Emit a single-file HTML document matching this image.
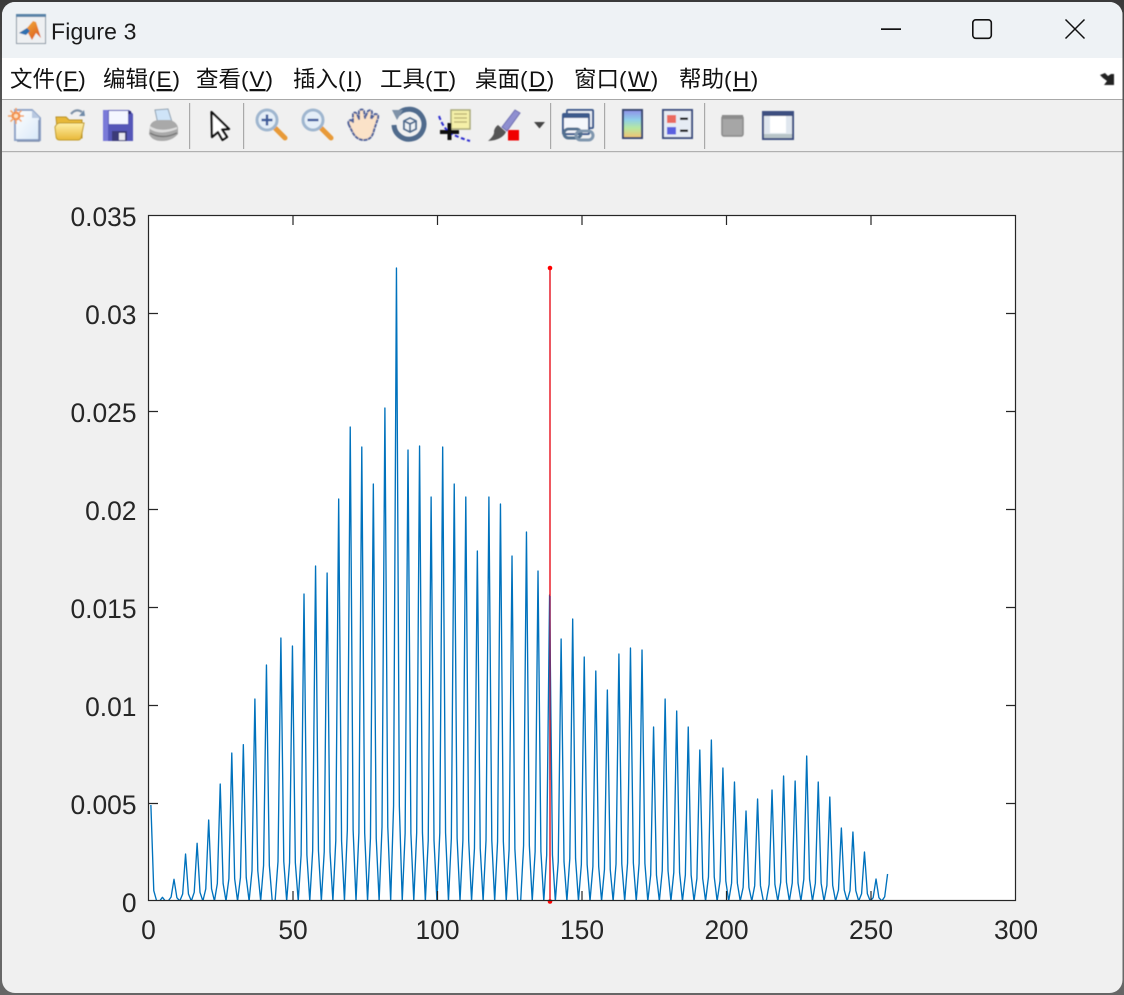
<!DOCTYPE html>
<html><head><meta charset="utf-8"><title>Figure 3</title>
<style>
html,body{margin:0;padding:0;width:1124px;height:995px;overflow:hidden;background:#6e6e6e}
svg{display:block;position:absolute;left:0;top:0}
.m{font-family:"Liberation Sans","Noto Sans CJK SC",sans-serif;font-size:22.5px;fill:#111}
.t{font-family:"Liberation Sans",Arial,sans-serif;font-size:26.4px;fill:#262626}
</style></head><body>
<svg width="1124" height="995" viewBox="0 0 1124 995" xmlns="http://www.w3.org/2000/svg">
<defs>
<linearGradient id="bk" x1="0" y1="0" x2="0" y2="1"><stop offset="0" stop-color="#3a3a3a"/><stop offset=".12" stop-color="#5a5a5a"/><stop offset=".5" stop-color="#8c8c8c"/><stop offset="1" stop-color="#666"/></linearGradient>
<linearGradient id="cb" x1="0" y1="0" x2="0" y2="1"><stop offset="0" stop-color="#8f8fe8"/><stop offset=".35" stop-color="#8fd0e8"/><stop offset=".65" stop-color="#b8e8a0"/><stop offset="1" stop-color="#f5c070"/></linearGradient>
<linearGradient id="fo" x1="0" y1="0" x2="0" y2="1"><stop offset="0" stop-color="#fff0a8"/><stop offset="1" stop-color="#e8b838"/></linearGradient>
<linearGradient id="pg" x1="0" y1="0" x2="1" y2="1"><stop offset="0" stop-color="#fff"/><stop offset="1" stop-color="#d8e8f8"/></linearGradient>
<linearGradient id="ml" x1="0" y1="0" x2="1" y2="1"><stop offset="0" stop-color="#f7c040"/><stop offset="1" stop-color="#d8501c"/></linearGradient>
<clipPath id="win"><rect x="2" y="2" width="1120.500" height="991" rx="13"/></clipPath>
<clipPath id="ax"><rect x="148.500" y="215.500" width="867" height="685.500"/></clipPath>
<filter id="s" x="-10%" y="-10%" width="120%" height="120%"><feGaussianBlur stdDeviation=".6"/></filter>
<filter id="l" x="-2%" y="-2%" width="104%" height="104%"><feGaussianBlur stdDeviation=".25"/></filter>
</defs>
<rect width="1124" height="995" fill="url(#bk)"/>
<rect width="1124" height="2" fill="#3a3a3a"/>
<g clip-path="url(#win)">
<rect x="0" y="0" width="1124" height="995" fill="#f0f0f0"/>
<rect x="0" y="0" width="1124" height="58" fill="#eef2f5"/>
<rect x="0" y="58" width="1124" height="41" fill="#fff"/>
<rect x="0" y="99" width="1124" height="1.200" fill="#a8a8a8"/>
<rect x="0" y="100" width="1124" height="51" fill="#f0f0f0"/>
<rect x="0" y="151" width="1124" height="1.200" fill="#b0b0b0"/>
</g>

<!-- app icon -->
<g filter="url(#s)">
<rect x="16.500" y="14.500" width="29" height="29" fill="#eef0f2" stroke="#8d99a6"/>
<rect x="16" y="14" width="30" height="3" fill="#5a84a8"/>
<path d="M19 33 L27 28 L33 21 L36 22 L41 38 L36 33 L32 40 L28 33 Z" fill="url(#ml)"/>
<path d="M19 33 L27 28 L30 31 L26 35 Z" fill="#2f6fb0"/>
</g>
<text x="51" y="39.500" font-family="'Liberation Sans',sans-serif" font-size="23" letter-spacing=".15" fill="#1a1a1a">Figure 3</text>

<!-- window buttons -->
<rect x="881" y="28.300" width="20" height="1.700" fill="#111"/>
<rect x="972.800" y="19.800" width="18.500" height="18.500" rx="3" fill="none" stroke="#111" stroke-width="1.600"/>
<path d="M1065.500 19.500 L1084.500 38.500 M1084.500 19.500 L1065.500 38.500" stroke="#111" stroke-width="1.500" fill="none"/>

<!-- menu -->
<g class="m">
<text class="m" x="10" y="87">文件<tspan letter-spacing="1">(<tspan text-decoration="underline">F</tspan>)</tspan></text>
<text class="m" x="103" y="87">编辑<tspan letter-spacing="1">(<tspan text-decoration="underline">E</tspan>)</tspan></text>
<text class="m" x="196" y="87">查看<tspan letter-spacing="1">(<tspan text-decoration="underline">V</tspan>)</tspan></text>
<text class="m" x="293" y="87">插入<tspan letter-spacing="1.500">(<tspan text-decoration="underline">I</tspan>)</tspan></text>
<text class="m" x="380" y="87">工具<tspan letter-spacing="1.200">(<tspan text-decoration="underline">T</tspan>)</tspan></text>
<text class="m" x="475" y="87">桌面<tspan letter-spacing="1.500">(<tspan text-decoration="underline">D</tspan>)</tspan></text>
<text class="m" x="574" y="87">窗口<tspan letter-spacing="1.500">(<tspan text-decoration="underline">W</tspan>)</tspan></text>
<text class="m" x="679" y="87">帮助<tspan letter-spacing="1.500">(<tspan text-decoration="underline">H</tspan>)</tspan></text>
</g>
<path d="M1100 75 L1105 73 L1108 76 L1111 74 L1114 74 L1114 85 L1104 85 L1107 81 L1103 78 Z" fill="#222" filter="url(#s)"/>

<!-- separators -->
<g fill="#a9a9a9">
<rect x="189" y="103" width="1.200" height="46"/><rect x="243" y="103" width="1.200" height="46"/>
<rect x="550" y="103" width="1.200" height="46"/><rect x="604" y="103" width="1.200" height="46"/>
<rect x="704" y="103" width="1.200" height="46"/>
</g>

<!-- toolbar icons -->
<g filter="url(#s)">
<!-- new -->
<path d="M15 110 H32 L40 118 V140 H15 Z" fill="url(#pg)" stroke="#8fa4c8" stroke-width="2"/>
<path d="M32 110 V118 H40 Z" fill="#b8c8e0"/>
<path d="M39 120 V141 H17" fill="none" stroke="#7f8fb0" stroke-width="1.500"/>
<circle cx="16" cy="116" r="4.500" fill="#f08038"/><path d="M16 108 V124 M8 116 H24 M10.500 110.500 L21.500 121.500 M21.500 110.500 L10.500 121.500" stroke="#f4a060" stroke-width="1.500"/>
<circle cx="16" cy="116" r="2" fill="#fde0c0"/>
<!-- open -->
<path d="M56 117 H66 L69 120 H82 V138 H58 Z" fill="#e8b838" stroke="#b89028"/>
<path d="M55 127 Q57 123 60 123 H84 L81 138 Q80 140 78 140 H60 Q56 140 56 136 Z" fill="url(#fo)" stroke="#c09a28"/>
<path d="M71 114 Q76 108 82 112" fill="none" stroke="#7f92a8" stroke-width="2.200"/><path d="M79 116 L85 116 L84 110 Z" fill="#6f8aa8"/>
<!-- save -->
<path d="M103 110 H129 L133 114 V141 H103 Z" fill="#5456b8"/>
<path d="M103 110 H108 V141 H103 Z" fill="#7a7ad8"/>
<rect x="109" y="111" width="19" height="13" fill="#f4f6ff"/>
<rect x="112" y="131" width="15" height="10" fill="#3a3a78"/><rect x="119" y="133" width="6" height="7" fill="#e8e8f0"/>
<rect x="128" y="111" width="3" height="3" fill="#2a2a70"/>
<!-- print -->
<path d="M155 110 L168 109 L172 122 L158 124 Z" fill="#cfe4f8" stroke="#90a0b0"/>
<path d="M150 126 Q152 120 160 120 H170 Q177 122 178 128 V134 Q172 141 162 141 Q152 141 149 134 Z" fill="#a9a9a9"/>
<path d="M150 126 Q160 133 177 127 L177 129 Q160 136 150 129 Z" fill="#dedede"/>
<path d="M150 133 Q162 140 177 133" fill="none" stroke="#777" stroke-width="1.500"/>
<!-- cursor -->
<path d="M211.500 112 L229 129 L222 129.500 L227 137 L222.500 140 L218 132 L212 137 Z" fill="#fff" stroke="#111" stroke-width="2.200" stroke-linejoin="round"/>
<!-- zoom in -->
<path d="M275 128 L285 138" stroke="#e89a38" stroke-width="5" stroke-linecap="round"/>
<circle cx="267" cy="120" r="10" fill="#e4eef8" stroke="#9fb6cf" stroke-width="3"/>
<path d="M261.500 120 H272.500 M267 114.500 V125.500" stroke="#3a5a9a" stroke-width="2.400"/>
<!-- zoom out -->
<path d="M321 128 L331 138" stroke="#e89a38" stroke-width="5" stroke-linecap="round"/>
<circle cx="313" cy="120" r="10" fill="#e4eef8" stroke="#9fb6cf" stroke-width="3"/>
<path d="M307.500 120 H318.500" stroke="#3a5a9a" stroke-width="2.400"/>
<!-- hand -->
<path d="M349 125 Q347 121 351 120 L353 122 L353 114 Q355 111 357 114 L359 119 L359 111 Q362 108 364 111 L365 118 L368 111 Q371 109 372 112 L371 119 L375 114 Q379 114 378 118 L374 130 Q372 140 364 140 Q357 140 353 133 Z" fill="#fbe2c8" stroke="#50629a" stroke-width="2" stroke-linejoin="round" stroke-dasharray="4 .6"/>
<!-- rotate -->
<path d="M398 114 A15 15 0 1 1 394 125" fill="none" stroke="#4f6a8c" stroke-width="5"/>
<path d="M392 110 L403 110 L397 120 Z" fill="#7f92a8"/>
<path d="M404 121 L410 118 L416 121 V129 L410 132 L404 129 Z M404 121 L410 124 L416 121 M410 124 V132" fill="#eef2f6" stroke="#4f6a8c" stroke-width="1.800"/>
<!-- data cursor -->
<rect x="451" y="110" width="19" height="19" fill="#f5f0a8" stroke="#a8a878" stroke-width="1.500"/>
<path d="M454 114 H467 M454 118 H467 M454 122 H467" stroke="#c0b878" stroke-width="1.400"/>
<path d="M439 116 Q444 130 452 134 T470 141" fill="none" stroke="#2a2ad0" stroke-width="2" stroke-dasharray="4 2.500"/>
<path d="M440 132 H459 M449.500 123 V140" stroke="#111" stroke-width="4"/>
<!-- brush -->
<path d="M502 127 L515 110 L520 113 L507 131 Z" fill="#8f8fd0" stroke="#6f6fb0"/>
<path d="M498 125 L506 132 Q502 140 488 141 Q495 135 494 131 Q495 127 498 125 Z" fill="#555"/>
<rect x="508" y="130" width="11" height="10.500" fill="#f00000"/>
<path d="M534 122 H545 L539.500 128.500 Z" fill="#444"/>
<!-- link -->
<rect x="567" y="110" width="26" height="18" rx="1" fill="#e9eef6" stroke="#3c5a8c" stroke-width="2"/>
<rect x="563" y="114" width="26" height="20" rx="1" fill="#f4f6fb" stroke="#3c5a8c" stroke-width="2"/>
<rect x="563" y="114" width="26" height="4" fill="#3c5a8c"/>
<rect x="564" y="129" width="17" height="9" rx="4.500" fill="none" stroke="#52708f" stroke-width="3"/>
<rect x="576" y="131" width="17" height="9" rx="4.500" fill="none" stroke="#7f96ae" stroke-width="3"/>
<!-- colorbar -->
<rect x="623" y="110" width="19" height="28" fill="url(#cb)" stroke="#37476f" stroke-width="2"/>
<!-- legend -->
<rect x="663" y="110" width="29" height="28" fill="#e6ecf4" stroke="#3c4f80" stroke-width="2"/>
<rect x="667" y="115" width="9" height="8" fill="#ea6a60"/><rect x="667" y="127" width="9" height="7.500" fill="#5a60e0"/>
<rect x="680" y="117.500" width="8" height="2.500" fill="#222"/><rect x="680" y="129.500" width="8" height="2.500" fill="#222"/>
<!-- gray box -->
<rect x="722" y="116" width="21" height="20" rx="2" fill="#a6a6a6" stroke="#8a8a8a" stroke-width="1.500"/>
<rect x="722" y="115" width="21" height="4" fill="#8c8c8c"/>
<!-- frame -->
<rect x="763" y="112" width="30" height="27" fill="#dfe6ee" stroke="#3c4f80" stroke-width="2"/>
<rect x="763" y="112" width="30" height="4" fill="#3c4f80"/>
<rect x="770" y="116" width="16" height="17" fill="#fff"/>
<rect x="764" y="134" width="28" height="4" fill="#b8c4c8"/>
</g>

<!-- axes -->
<rect x="148.500" y="215.500" width="867" height="685" fill="#fff"/>
<g clip-path="url(#ax)"><g filter="url(#l)">
<polyline fill="none" stroke="#0072bd" stroke-width="1.350" stroke-linejoin="round" transform="translate(148 0) scale(2.889 1)" style="vector-effect:non-scaling-stroke" points="
1,805 2,890.700 3,901 4,901 5,897.300 6,901 7,901 8,897 9,879.300 10,897.700 11,901 12,894 13,854 14,894 15,901 16,892.300 17,843.300 18,892.300 19,901 20,888.900 21,820 22,888.900 23,901 24,883.500 25,784 26,883.500 27,901 28,878.800 29,753 30,878.800 31,901 32,877.500 33,744.700 34,877.500 35,901 36,870.700 37,699 38,870.700 39,901 40,865.600 41,665 42,865.600 43,901 44,901 45,861.500 46,638 47,861.500 48,901 49,862.700 50,646 51,862.700 52,901 53,855 54,594 55,855 56,901 57,850.700 58,566 59,850.700 60,901 61,851.800 62,573 63,851.800 64,901 65,840.700 66,499 67,840.700 68,901 69,829.900 70,427 71,829.900 72,901 73,832.900 74,447 75,832.900 76,901 77,838.400 78,484 79,838.400 80,901 81,827 82,408 83,827 84,901 85,806 86,268 87,806 88,901 89,833.400 90,450 91,833.400 92,901 93,832.700 94,446 95,832.700 96,901 97,840.400 98,497 99,840.400 100,901 101,832.900 102,447 103,832.900 104,901 105,838.400 106,484 107,838.400 108,901 109,840.400 110,497 111,840.400 112,901 113,848.500 114,551 115,848.500 116,901 117,840.400 118,497 119,840.400 120,901 121,841.500 122,504 123,841.500 124,901 125,849.200 126,556 127,849.200 128,901 129,901 130,845.600 131,532 132,845.600 133,901 134,851.500 135,571 136,851.500 137,901 138,855 139,595 140,855 141,901 142,861.700 143,639 144,861.700 145,901 146,858.700 147,619 148,858.700 149,901 150,864.400 151,657 152,864.400 153,901 154,866.500 155,671 156,866.500 157,901 158,869.400 159,690 160,869.400 161,901 162,864 163,654 164,864 165,901 166,863 167,648 168,863 169,901 170,863.400 171,650 172,863.400 173,901 174,875 175,727 176,875 177,901 178,870.700 179,699 180,870.700 181,901 182,872.500 183,711 184,872.500 185,901 186,875 187,727 188,875 189,901 190,878.400 191,750 192,878.400 193,901 194,876.900 195,740 196,876.900 197,901 198,881 199,768 200,881 201,901 202,883.200 203,782 204,883.200 205,901 206,887.500 207,811 208,887.500 209,901 210,885.700 211,799 212,885.700 213,901 214,901 215,884.400 216,790 217,884.400 218,901 219,882.300 220,776 221,882.300 222,901 223,883 224,781 225,883 226,901 227,879.300 228,756 229,879.300 230,901 231,883.200 232,782 233,883.200 234,901 235,885.400 236,797 237,885.400 238,901 239,890 240,828 241,890 242,901 243,890.700 244,832 245,890.700 246,901 247,893.700 248,852 249,893.700 250,901 251,897.700 252,879 253,897.700 254,901 255,896.700 256,874"/>
</g></g>
<path d="M550 268 V901.500" stroke="#e8101c" stroke-width="1.400" fill="none"/>
<circle cx="550" cy="268" r="2.300" fill="#f00"/><circle cx="550" cy="901.500" r="2.300" fill="#f00"/>
<path d="M550 596 V720" stroke="#5a2f80" stroke-width="1.400" opacity=".75"/>
<path d="M550 720 V780" stroke="#8a2050" stroke-width="1.400" opacity=".4"/>

<!-- box and ticks -->
<rect x="148.500" y="215.500" width="867" height="685" fill="none" stroke="#262626" stroke-width="1.200"/>
<path stroke="#262626" stroke-width="1.200" fill="none" d="
M293 900 v-9 M437.500 900 v-9 M582 900 v-9 M726.500 900 v-9 M871 900 v-9
M293 216 v9 M437.500 216 v9 M582 216 v9 M726.500 216 v9 M871 216 v9
M149 803.500 h9 M149 705.500 h9 M149 607.500 h9 M149 509.500 h9 M149 411.500 h9 M149 313.500 h9
M1015 803.500 h-9 M1015 705.500 h-9 M1015 607.500 h-9 M1015 509.500 h-9 M1015 411.500 h-9 M1015 313.500 h-9"/>

<!-- y labels -->
<g text-anchor="end">
<text class="t" x="136.500" y="912">0</text>
<text class="t" x="136.500" y="814">0.005</text>
<text class="t" x="136.500" y="716">0.01</text>
<text class="t" x="136.500" y="618">0.015</text>
<text class="t" x="136.500" y="520">0.02</text>
<text class="t" x="136.500" y="422">0.025</text>
<text class="t" x="136.500" y="324">0.03</text>
<text class="t" x="136.500" y="226">0.035</text>
</g>
<!-- x labels -->
<g text-anchor="middle">
<text class="t" x="148.500" y="939">0</text>
<text class="t" x="293" y="939">50</text>
<text class="t" x="437.500" y="939">100</text>
<text class="t" x="582" y="939">150</text>
<text class="t" x="726.500" y="939">200</text>
<text class="t" x="871" y="939">250</text>
<text class="t" x="1016" y="939">300</text>
</g>
</svg>
</body></html>
